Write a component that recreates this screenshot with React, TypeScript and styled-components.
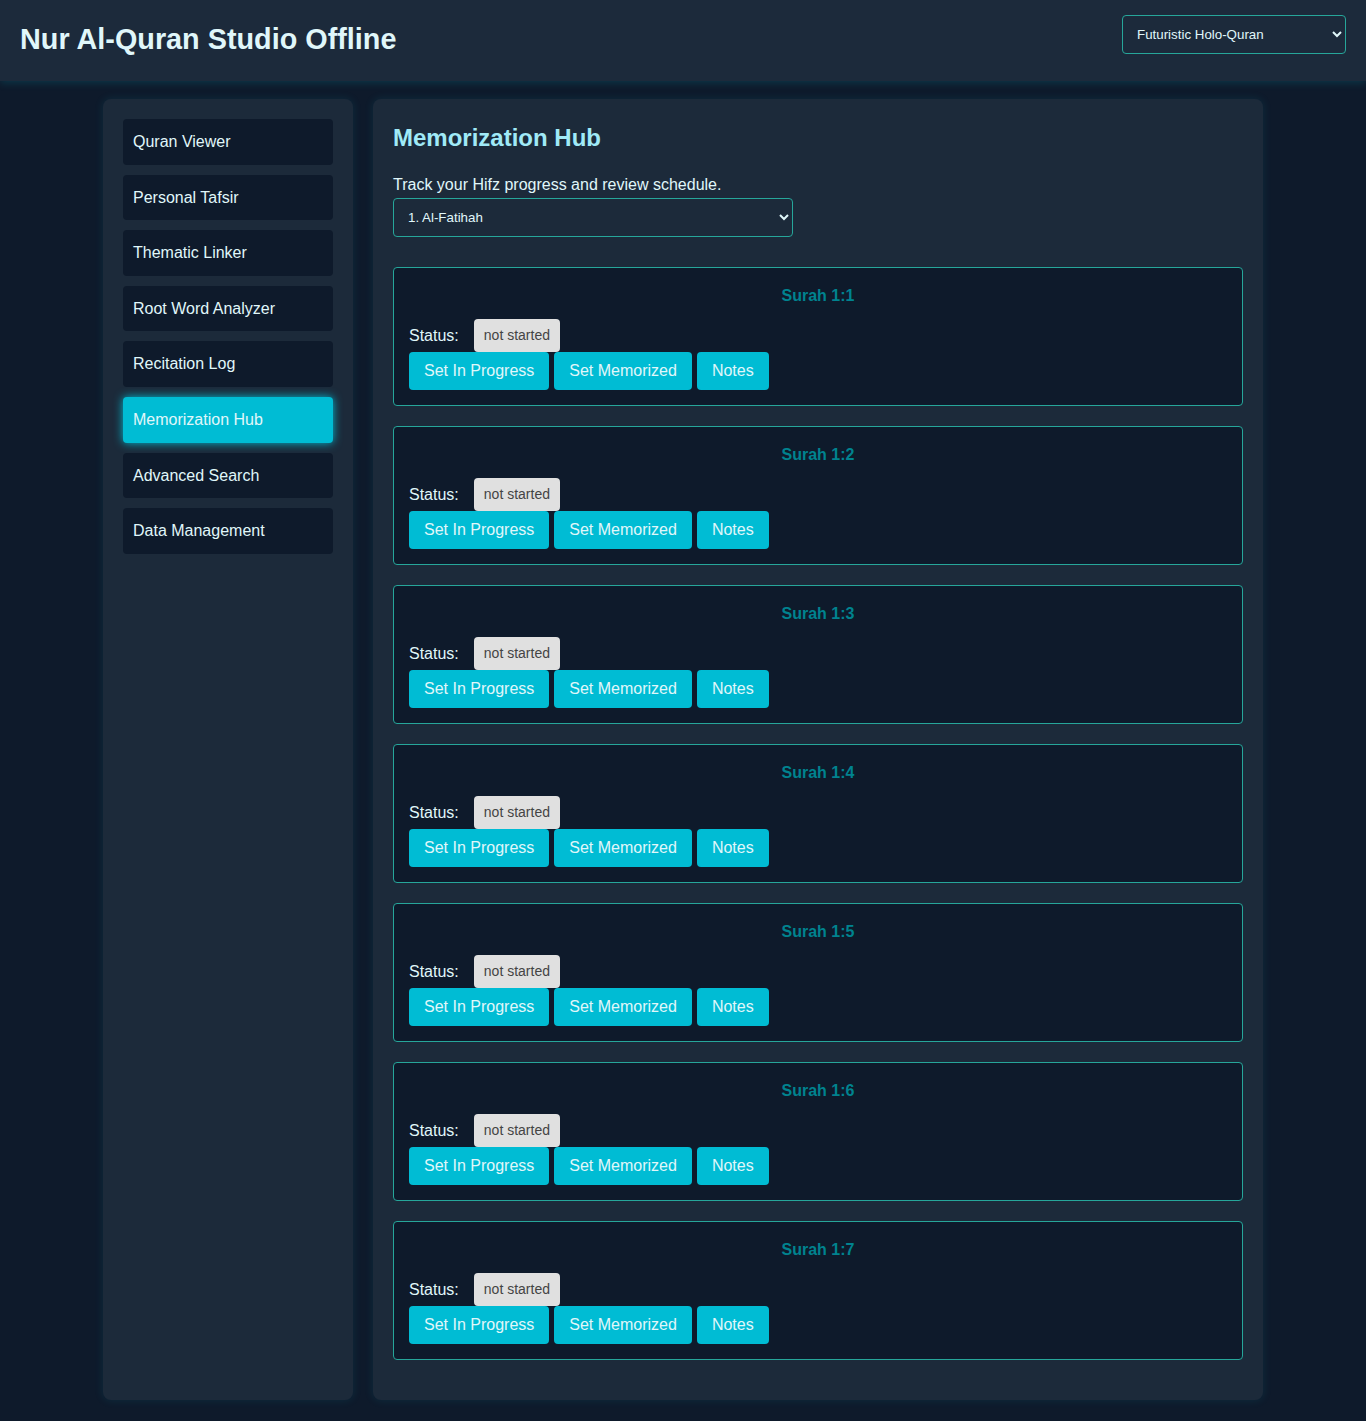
import React from "react";
import styled, { createGlobalStyle } from "styled-components";

const GlobalStyle = createGlobalStyle`
  html, body {
    margin: 0;
    padding: 0;
    background: #0e1a2b;
    color: #e0f7fa;
    font-family: "Liberation Sans", Arial, sans-serif;
  }
  * { box-sizing: border-box; }
`;

const Header = styled.header`
  height: 81px;
  background: #1c2a3b;
  display: flex;
  align-items: center;
  justify-content: space-between;
  padding: 0 20px;
  box-shadow: 0 2px 8px rgba(0, 188, 212, 0.18);
  position: relative;
  z-index: 1;
`;

const Title = styled.h1`
  margin: -2px 0 0;
  font-size: 28.8px;
  font-weight: bold;
  color: #e0f7fa;
`;

const Select = styled.select<{ $width: number }>`
  width: ${(p) => p.$width}px;
  height: 39px;
  background: transparent;
  color: #e0f7fa;
  border: 1px solid #26a69a;
  border-radius: 4px;
  padding: 0 10px;
  font-family: "Liberation Sans", Arial, sans-serif;
  font-size: 13.33px;
  option { background: #1c2a3b; }
`;

const HeaderSelect = styled(Select)`
  margin-top: -12px;
`;

const Layout = styled.div`
  display: flex;
  gap: 20px;
  max-width: 1160px;
  margin: 18px auto 20px;
  align-items: stretch;
`;

const Sidebar = styled.nav`
  width: 250px;
  flex-shrink: 0;
  background: #1c2a3a;
  border-radius: 8px;
  padding: 20px;
  box-shadow: 0 0 10px rgba(0, 188, 212, 0.12);
  display: flex;
  flex-direction: column;
  gap: 10px;
`;

const NavButton = styled.button<{ $active?: boolean }>`
  display: block;
  width: 100%;
  text-align: left;
  padding: 12px 10px;
  line-height: 21.6px;
  font-size: 16px;
  font-family: "Liberation Sans", Arial, sans-serif;
  border: none;
  border-radius: 4px;
  cursor: pointer;
  background: ${(p) => (p.$active ? "#00bcd4" : "#0e1a2b")};
  color: #e0f7fa;
  box-shadow: ${(p) => (p.$active ? "0 0 10px #00bcd4" : "none")};
`;

const Main = styled.main`
  flex: 1;
  background: #1c2a3a;
  border-radius: 8px;
  padding: 20px;
  box-shadow: 0 0 10px rgba(0, 188, 212, 0.12);
`;

const Heading = styled.h2`
  margin: 5px 0 0;
  font-size: 24px;
  line-height: 28px;
  color: #a0eaf7;
`;

const Intro = styled.p`
  margin: 24px 0 4px;
  font-size: 16px;
  line-height: 18px;
`;

const SurahSelect = styled(Select)`
  margin-bottom: 30px;
`;

const Card = styled.section`
  background: #0e1a2b;
  border: 1px solid #26a69a;
  border-radius: 4px;
  padding: 15px;
  margin-bottom: 20px;
  display: flex;
  flex-direction: column;
`;

const CardTitle = styled.h4`
  margin: 3px 0 13px;
  font-size: 16px;
  line-height: 20px;
  text-align: center;
  color: #00838f;
`;

const StatusRow = styled.div`
  display: flex;
  align-items: center;
  gap: 15px;
  font-size: 16px;
`;

const Badge = styled.span`
  display: inline-block;
  background: #e0e0e0;
  color: #444;
  font-size: 14px;
  line-height: 33px;
  height: 33px;
  padding: 0 10px;
  border-radius: 4px;
`;

const Actions = styled.div`
  display: flex;
  gap: 5px;
`;

const ActionButton = styled.button`
  background: #00bcd4;
  color: #e0f7fa;
  border: none;
  border-radius: 4px;
  padding: 0 15px;
  height: 38px;
  font-size: 16px;
  font-family: "Liberation Sans", Arial, sans-serif;
  cursor: pointer;
`;

const navItems = [
  "Quran Viewer",
  "Personal Tafsir",
  "Thematic Linker",
  "Root Word Analyzer",
  "Recitation Log",
  "Memorization Hub",
  "Advanced Search",
  "Data Management",
];

export default function App() {
  return (
    <>
      <GlobalStyle />
      <Header>
        <Title>Nur Al-Quran Studio Offline</Title>
        <HeaderSelect $width={224} defaultValue="holo">
          <option value="holo">Futuristic Holo-Quran</option>
        </HeaderSelect>
      </Header>
      <Layout>
        <Sidebar>
          {navItems.map((n) => (
            <NavButton key={n} $active={n === "Memorization Hub"}>
              {n}
            </NavButton>
          ))}
        </Sidebar>
        <Main>
          <Heading>Memorization Hub</Heading>
          <Intro>Track your Hifz progress and review schedule.</Intro>
          <SurahSelect $width={400} defaultValue="1">
            <option value="1">1. Al-Fatihah</option>
          </SurahSelect>
          {[1, 2, 3, 4, 5, 6, 7].map((a) => (
            <Card key={a}>
              <CardTitle>Surah 1:{a}</CardTitle>
              <StatusRow>
                <span>Status:</span>
                <Badge>not started</Badge>
              </StatusRow>
              <Actions>
                <ActionButton>Set In Progress</ActionButton>
                <ActionButton>Set Memorized</ActionButton>
                <ActionButton>Notes</ActionButton>
              </Actions>
            </Card>
          ))}
        </Main>
      </Layout>
    </>
  );
}
